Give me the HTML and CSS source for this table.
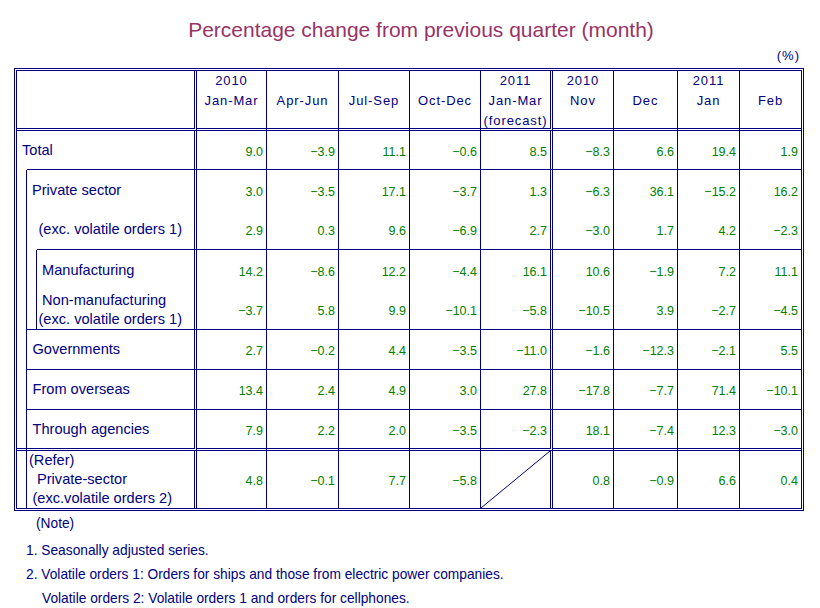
FILE: index.html
```html
<!DOCTYPE html>
<html lang="en">
<head>
<meta charset="utf-8">
<title>Percentage change from previous quarter (month)</title>
<link rel="stylesheet" href="styles.css">
</head>
<body>
<div class="page">
  <h1 class="title">Percentage change from previous quarter (month)</h1>
  <div class="unit">(%)</div>
  <div class="tbl">
    <div class="row hdr">
      <div class="lab hl"></div>
      <div class="h"><span>2010</span><span>Jan-Mar</span></div>
      <div class="h mid"><span>Apr-Jun</span></div>
      <div class="h mid"><span>Jul-Sep</span></div>
      <div class="h mid"><span>Oct-Dec</span></div>
      <div class="h"><span>2011</span><span>Jan-Mar</span><span>(forecast)</span></div>
      <div class="h"><span>2010</span><span>Nov</span></div>
      <div class="h mid"><span>Dec</span></div>
      <div class="h"><span>2011</span><span>Jan</span></div>
      <div class="h mid"><span>Feb</span></div>
    </div>
    <div class="row">
      <div class="lab tot">Total</div>
      <div class="lab totb"></div>
      <div class="n">9.0</div><div class="n">−3.9</div><div class="n">11.1</div><div class="n">−0.6</div><div class="n">8.5</div><div class="n">−8.3</div><div class="n">6.6</div><div class="n">19.4</div><div class="n">1.9</div>
    </div>
    <div class="row open">
      <div class="lab g0"></div>
      <div class="lab priv">Private sector</div>
      <div class="n">3.0</div><div class="n">−3.5</div><div class="n">17.1</div><div class="n">−3.7</div><div class="n">1.3</div><div class="n">−6.3</div><div class="n">36.1</div><div class="n">−15.2</div><div class="n">16.2</div>
    </div>
    <div class="row">
      <div class="lab exc0"></div>
      <div class="lab exc">(exc. volatile orders 1)</div>
      <div class="n">2.9</div><div class="n">0.3</div><div class="n">9.6</div><div class="n">−6.9</div><div class="n">2.7</div><div class="n">−3.0</div><div class="n">1.7</div><div class="n">4.2</div><div class="n">−2.3</div>
    </div>
    <div class="row open">
      <div class="lab g1"></div>
      <div class="lab manu">Manufacturing</div>
      <div class="n">14.2</div><div class="n">−8.6</div><div class="n">12.2</div><div class="n">−4.4</div><div class="n">16.1</div><div class="n">10.6</div><div class="n">−1.9</div><div class="n">7.2</div><div class="n">11.1</div>
    </div>
    <div class="row">
      <div class="lab nonm">Non-manufacturing<br>(exc. volatile orders 1)</div>
      <div class="n">−3.7</div><div class="n">5.8</div><div class="n">9.9</div><div class="n">−10.1</div><div class="n">−5.8</div><div class="n">−10.5</div><div class="n">3.9</div><div class="n">−2.7</div><div class="n">−4.5</div>
    </div>
    <div class="row">
      <div class="lab gov">Governments</div>
      <div class="n">2.7</div><div class="n">−0.2</div><div class="n">4.4</div><div class="n">−3.5</div><div class="n">−11.0</div><div class="n">−1.6</div><div class="n">−12.3</div><div class="n">−2.1</div><div class="n">5.5</div>
    </div>
    <div class="row">
      <div class="lab ovs">From overseas</div>
      <div class="n">13.4</div><div class="n">2.4</div><div class="n">4.9</div><div class="n">3.0</div><div class="n">27.8</div><div class="n">−17.8</div><div class="n">−7.7</div><div class="n">71.4</div><div class="n">−10.1</div>
    </div>
    <div class="row thick">
      <div class="lab agn">Through agencies</div>
      <div class="n">7.9</div><div class="n">2.2</div><div class="n">2.0</div><div class="n">−3.5</div><div class="n">−2.3</div><div class="n">18.1</div><div class="n">−7.4</div><div class="n">12.3</div><div class="n">−3.0</div>
    </div>
    <div class="row open">
      <div class="lab ref0"></div>
      <div class="lab ref"><span class="l1">(Refer)</span><span class="l2">Private-sector</span><span class="l3">(exc.volatile orders 2)</span></div>
      <div class="n">4.8</div><div class="n">−0.1</div><div class="n">7.7</div><div class="n">−5.8</div>
      <div class="n diag"><svg viewBox="0 0 100 100" preserveAspectRatio="none"><line x1="0" y1="100" x2="100" y2="0" vector-effect="non-scaling-stroke"/></svg></div>
      <div class="n">0.8</div><div class="n">−0.9</div><div class="n">6.6</div><div class="n">0.4</div>
    </div>
  </div>
  <div class="notes">
    <p class="nhead">(Note)</p>
    <p class="nl first">1. Seasonally adjusted series.</p>
    <p class="nl">2. Volatile orders 1: Orders for ships and those from electric power companies.</p>
    <p class="nl sub">Volatile orders 2: Volatile orders 1 and orders for cellphones.</p>
  </div>
</div>
</body>
</html>
```

FILE: styles.css
```css
* {
  box-sizing: border-box;
}

body {
  margin: 0;
  background: #ffffff;
  font-family: "Liberation Sans", Arial, sans-serif;
  color: #000080;
}

.page {
  width: 820px;
  padding-left: 14px;
}

.title {
  margin: 0;
  width: 790px;
  padding: 17px 0 0 24px;
  text-align: center;
  font-size: 21px;
  line-height: 26px;
  font-weight: normal;
  color: #993366;
}

.unit {
  width: 790px;
  height: 25px;
  padding-right: 4px;
  text-align: right;
  font-size: 13px;
  line-height: 25px;
  letter-spacing: 1px;
  color: #000080;
}

.tbl {
  display: grid;
  width: 790px;
  border: 3px double #000080;
  grid-template-columns: 10px 10px 160px 70px 72px 71px 71px 72px 61px 64px 62px 61px;
  grid-template-rows: 60px 39px 40px 40px 40px 40px 40px 40px 41px 57px;
}

.row {
  display: contents;
}

/* label cells */
.lab {
  display: flex;
  flex-direction: column;
  justify-content: center;
  font-size: 14.6px;
  line-height: 19px;
  white-space: nowrap;
  color: #000080;
}

.hl {
  grid-row: 1;
  grid-column: 1 / 4;
  border-right: 3px double #000080;
  border-bottom: 3px double #000080;
}

.tot {
  grid-row: 2;
  grid-column: 1 / 2;
  padding-left: 5px;
}

.totb {
  grid-row: 2;
  grid-column: 2 / 4;
  border-right: 3px double #000080;
  border-bottom: 1px solid #000080;
}

.g0 {
  grid-row: 3 / 10;
  grid-column: 1 / 2;
  border-right: 1px solid #000080;
  border-bottom: 3px double #000080;
}

.priv {
  grid-row: 3;
  grid-column: 2 / 4;
  padding-left: 5px;
  border-right: 3px double #000080;
}

.exc0 {
  grid-row: 4;
  grid-column: 2 / 3;
}

.exc {
  grid-row: 4;
  grid-column: 3 / 4;
  padding-left: 1.5px;
  border-right: 3px double #000080;
  border-bottom: 1px solid #000080;
}

.g1 {
  grid-row: 5 / 7;
  grid-column: 2 / 3;
  border-right: 1px solid #000080;
  border-bottom: 1px solid #000080;
}

.manu {
  grid-row: 5;
  grid-column: 3 / 4;
  padding-left: 5px;
  border-right: 3px double #000080;
}

.nonm {
  grid-row: 6;
  grid-column: 3 / 4;
  padding-left: 1.5px;
  text-indent: 3.5px;
  border-right: 3px double #000080;
  border-bottom: 1px solid #000080;
}

.gov,
.ovs,
.agn {
  grid-column: 2 / 4;
  padding-left: 5.5px;
  border-right: 3px double #000080;
  border-bottom: 1px solid #000080;
}

.gov { grid-row: 7; }
.ovs { grid-row: 8; }
.agn {
  grid-row: 9;
  border-bottom: 3px double #000080;
}

.ref0 {
  grid-row: 10;
  grid-column: 1 / 2;
  border-right: 1px solid #000080;
}

.ref {
  grid-row: 10;
  grid-column: 2 / 4;
  padding-left: 2px;
  border-right: 3px double #000080;
}

.ref span {
  display: block;
}

.ref .l2 { padding-left: 8px; }
.ref .l3 { padding-left: 3.5px; }

/* header cells */
.h {
  display: flex;
  flex-direction: column;
  align-items: center;
  font-size: 13px;
  line-height: 20px;
  letter-spacing: 0.9px;
  color: #000080;
  white-space: nowrap;
}

.h.mid {
  padding-top: 20px;
}

/* number cells */
.n {
  display: flex;
  align-items: center;
  justify-content: flex-end;
  padding: 3px 3px 0 0;
  font-size: 12.5px;
  color: #008000;
  white-space: nowrap;
}

.row > .h,
.row > .n {
  border-right: 1px solid #000080;
  border-bottom: 1px solid #000080;
}

.hdr > .h {
  border-bottom: 3px double #000080;
}

.open > .n {
  border-bottom: none;
}

.thick > .n {
  border-bottom: 3px double #000080;
}

.row > :nth-last-child(5) {
  border-right: 3px double #000080;
}

.row > :last-child {
  border-right: none;
}

.diag {
  padding: 0;
}

.diag svg {
  display: block;
  width: 100%;
  height: 100%;
}

.diag line {
  stroke: #000080;
  stroke-width: 1;
}

/* notes */
.notes {
  padding-top: 1px;
  font-size: 13.75px;
  line-height: 24px;
  color: #000080;
}

.notes p {
  margin: 0;
  white-space: nowrap;
}

.nhead {
  padding-left: 22px;
}

.nl {
  padding-left: 12px;
}

.nl.first {
  margin-top: 3px;
}

.nl.sub {
  padding-left: 28px;
}
```
